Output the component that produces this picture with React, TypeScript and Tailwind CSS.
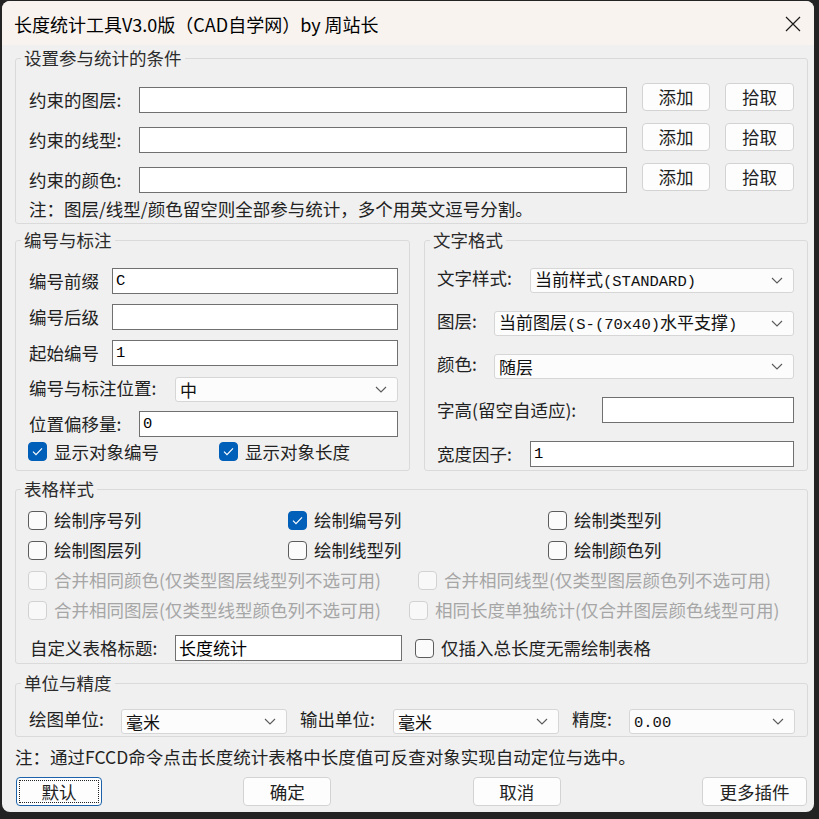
import type { ReactNode } from 'react';

const SANS = "font-['Noto_Sans_CJK_SC','Noto_Sans',sans-serif]";
const MONO = "font-['Liberation_Mono','Noto_Sans_CJK_SC',monospace]";

// Group box: the fieldset only draws the frame and legend, the inner div carries the padding
function Group({
  title,
  className,
  inner,
  children,
}: {
  title: string;
  className?: string;
  inner?: string;
  children: ReactNode;
}) {
  return (
    <fieldset className={`border border-[#dadada] rounded-[3px] ${className ?? ''}`}>
      <legend className="ml-[5px] px-[3px] text-[17.5px] leading-[24px] text-[#2b2b2b]">{title}</legend>
      <div className={inner}>{children}</div>
    </fieldset>
  );
}

function Label({ text, className }: { text: string; className?: string }) {
  return (
    <div className={`shrink-0 flex items-center text-[17.5px] leading-[24px] text-[#222] whitespace-nowrap ${className ?? ''}`}>
      {text}
    </div>
  );
}

// ASCII runs are set a little smaller so they sit at half the CJK width
function Mixed({ text }: { text: string }) {
  const parts = text.split(/([\x20-\x7e]+)/).filter(Boolean);
  return (
    <>
      {parts.map((p, i) =>
        /^[\x20-\x7e]+$/.test(p) ? (
          <span key={i} className={`text-[15.5px] ${MONO}`}>
            {p}
          </span>
        ) : (
          <span key={i}>{p}</span>
        ),
      )}
    </>
  );
}

function TextBox({ value = '', className }: { value?: string; className?: string }) {
  return (
    <div
      className={`shrink-0 h-[26px] bg-white border border-[#707070] flex items-center px-[3px] text-[17px] leading-[24px] text-black whitespace-nowrap ${className ?? ''}`}
    >
      <Mixed text={value} />
    </div>
  );
}

function Chevron() {
  return (
    <svg width="12" height="7" viewBox="0 0 12 7" className="shrink-0">
      <path d="M1 1l5 5 5-5" fill="none" stroke="#5a5a5a" strokeWidth="1.1" />
    </svg>
  );
}

function Combo({ value, className }: { value: string; className?: string }) {
  return (
    <div
      className={`shrink-0 h-[25px] bg-[#fcfcfc] border border-[#d6d6d6] rounded-[3px] flex items-center justify-between pl-[4px] pr-[10px] text-[17px] leading-[24px] text-[#111] ${className ?? ''}`}
    >
      <span className="whitespace-nowrap">
        <Mixed text={value} />
      </span>
      <Chevron />
    </div>
  );
}

function Btn({ text, className, focused }: { text: string; className?: string; focused?: boolean }) {
  return (
    <div
      className={`shrink-0 h-[28px] bg-[#fdfdfd] rounded-[4px] border flex items-center justify-center text-[17.5px] leading-[24px] text-[#222] ${
        focused ? 'border-[#1b62a8] p-[2px]' : 'border-[#d3d3d3]'
      } ${className ?? ''}`}
    >
      {focused ? (
        <div className="w-full h-full border border-dotted border-[#222] flex items-center justify-center">{text}</div>
      ) : (
        text
      )}
    </div>
  );
}

function Check({
  label,
  checked,
  disabled,
  className,
}: {
  label: string;
  checked?: boolean;
  disabled?: boolean;
  className?: string;
}) {
  let box = 'border-[#5c5c5c] bg-[#fbfbfb]';
  if (checked) box = 'border-[#005fb8] bg-[#005fb8]';
  if (disabled) box = 'border-[#d2d2d2] bg-[#f8f8f8]';
  return (
    <div className={`flex items-center gap-[7px] whitespace-nowrap ${className ?? ''}`}>
      <div className={`w-[19px] h-[19px] rounded-[4px] border flex items-center justify-center shrink-0 ${box}`}>
        {checked && (
          <svg width="11" height="9" viewBox="0 0 11 9">
            <path d="M1 4.6l3 3L10 1.4" fill="none" stroke="#fff" strokeWidth="1.2" />
          </svg>
        )}
      </div>
      <span className={`text-[17.5px] leading-[24px] ${disabled ? 'text-[#a6a6a6]' : 'text-[#222]'}`}>{label}</span>
    </div>
  );
}

const FILTERS = ['约束的图层:', '约束的线型:', '约束的颜色:'];

export default function App() {
  return (
    <div className={`w-[819px] h-[819px] bg-[#232323] pt-[1px] pl-[2px] ${SANS}`}>
      <div className="w-[812px] h-[811px] rounded-[8px] overflow-hidden bg-[#f0f0f0] flex flex-col">
        {/* title bar */}
        <div className="h-[44px] shrink-0 bg-[#f8f3ef] flex items-center justify-between pl-[12px] pr-[13px]">
          <span className="text-[18px] leading-[26px] text-black mt-[1px]">长度统计工具V3.0版（CAD自学网）by 周站长</span>
          <svg width="16" height="16" viewBox="0 0 16 16" className="mt-[1px]">
            <path d="M1 1l14 14M15 1L1 15" stroke="#1a1a1a" strokeWidth="1.2" />
          </svg>
        </div>

        <div className="pl-[13px] pr-[6px] flex flex-col">
          {/* filter conditions */}
          <Group title="设置参与统计的条件" className="mt-[1px]" inner="pt-[13px] px-[13px] pb-[2px]">
            {FILTERS.map((f, i) => (
              <div key={f} className={`flex items-start h-[30px] ${i > 0 ? 'mt-[10px]' : ''}`}>
                <Label text={f} className="w-[110px] h-[26px] mt-[4px]" />
                <TextBox className="w-[488px] mt-[4px]" />
                <Btn text="添加" className="w-[68px] ml-[15px]" />
                <Btn text="拾取" className="w-[69px] ml-[15px]" />
              </div>
            ))}
            <div className="mt-[4px] text-[17.5px] leading-[24px] text-[#222]">
              注：图层/线型/颜色留空则全部参与统计，多个用英文逗号分割。
            </div>
          </Group>

          <div className="flex mt-[4px]">
            {/* numbering */}
            <Group title="编号与标注" className="w-[395px] h-[243px]" inner="pt-[16px] pl-[13px] pr-[11px]">
              <div className="flex h-[26px]">
                <Label text="编号前缀" className="w-[83px]" />
                <TextBox value="C" className="w-[286px]" />
              </div>
              <div className="flex h-[26px] mt-[10px]">
                <Label text="编号后级" className="w-[83px]" />
                <TextBox className="w-[286px]" />
              </div>
              <div className="flex h-[26px] mt-[10px]">
                <Label text="起始编号" className="w-[83px]" />
                <TextBox value="1" className="w-[286px]" />
              </div>
              <div className="flex h-[24px] mt-[11px]">
                <Label text="编号与标注位置:" className="w-[146px] -mt-[3px]" />
                <Combo value="中" className="w-[223px] h-[24px]" />
              </div>
              <div className="flex h-[26px] mt-[10px]">
                <Label text="位置偏移量:" className="w-[110px]" />
                <TextBox value="0" className="w-[259px]" />
              </div>
              <div className="flex h-[19px] mt-[5px] -ml-[1px]">
                <Check label="显示对象编号" checked className="w-[191px]" />
                <Check label="显示对象长度" checked />
              </div>
            </Group>

            {/* text format */}
            <Group title="文字格式" className="ml-[14px] w-[384px] h-[243px]" inner="pt-[16px] pl-[12px] pr-[13px]">
              <div className="flex h-[25px]">
                <Label text="文字样式:" className="w-[93px] -mt-[5px]" />
                <Combo value="当前样式(STANDARD)" className="w-[264px]" />
              </div>
              <div className="flex h-[25px] mt-[18px]">
                <Label text="图层:" className="w-[57px] -mt-[5px]" />
                <Combo value="当前图层(S-(70x40)水平支撑)" className="w-[300px]" />
              </div>
              <div className="flex h-[25px] mt-[18px]">
                <Label text="颜色:" className="w-[57px] -mt-[5px]" />
                <Combo value="随层" className="w-[300px]" />
              </div>
              <div className="flex h-[26px] mt-[18px]">
                <Label text="字高(留空自适应):" className="w-[165px]" />
                <TextBox className="w-[192px]" />
              </div>
              <div className="flex h-[26px] mt-[18px]">
                <Label text="宽度因子:" className="w-[93px]" />
                <TextBox value="1" className="w-[264px]" />
              </div>
            </Group>
          </div>

          {/* table style */}
          <Group title="表格样式" className="mt-[6px] h-[187px]" inner="pt-[4px] px-[12px]">
            <div className="grid grid-cols-[260px_260px_1fr] h-[30px] items-center">
              <Check label="绘制序号列" />
              <Check label="绘制编号列" checked />
              <Check label="绘制类型列" />
            </div>
            <div className="grid grid-cols-[260px_260px_1fr] h-[30px] items-center">
              <Check label="绘制图层列" />
              <Check label="绘制线型列" />
              <Check label="绘制颜色列" />
            </div>
            <div className="grid grid-cols-[390px_1fr] h-[30px] items-center">
              <Check label="合并相同颜色(仅类型图层线型列不选可用)" disabled />
              <Check label="合并相同线型(仅类型图层颜色列不选可用)" disabled />
            </div>
            <div className="grid grid-cols-[381px_1fr] h-[30px] items-center">
              <Check label="合并相同图层(仅类型线型颜色列不选可用)" disabled />
              <Check label="相同长度单独统计(仅合并图层颜色线型可用)" disabled />
            </div>
            <div className="flex h-[26px] mt-[10px] items-center">
              <Label text="自定义表格标题:" className="w-[145px] ml-[2px]" />
              <TextBox value="长度统计" className="w-[227px]" />
              <Check label="仅插入总长度无需绘制表格" className="ml-[13px]" />
            </div>
          </Group>

          {/* units */}
          <Group title="单位与精度" className="mt-[7px] h-[66px]" inner="pt-[14px] pl-[13px] pr-[12px]">
            <div className="flex h-[25px]">
              <Label text="绘图单位:" className="w-[92px] -mt-[5px]" />
              <Combo value="毫米" className="w-[166px]" />
              <Label text="输出单位:" className="w-[93px] ml-[13px] -mt-[5px]" />
              <Combo value="毫米" className="w-[166px]" />
              <Label text="精度:" className="w-[57px] ml-[13px] -mt-[5px]" />
              <Combo value="0.00" className="w-[166px]" />
            </div>
          </Group>

          <div className="mt-[8px] text-[17.5px] leading-[24px] text-[#222] whitespace-nowrap">
            注：通过FCCD命令点击长度统计表格中长度值可反查对象实现自动定位与选中。
          </div>

          <div className="mt-[8px] flex justify-between ml-[1px] mr-[1px]">
            <Btn text="默认" focused className="w-[86px] h-[29px]" />
            <Btn text="确定" className="w-[88px] h-[29px]" />
            <Btn text="取消" className="w-[88px] h-[29px]" />
            <Btn text="更多插件" className="w-[105px] h-[29px]" />
          </div>
        </div>
      </div>
    </div>
  );
}
